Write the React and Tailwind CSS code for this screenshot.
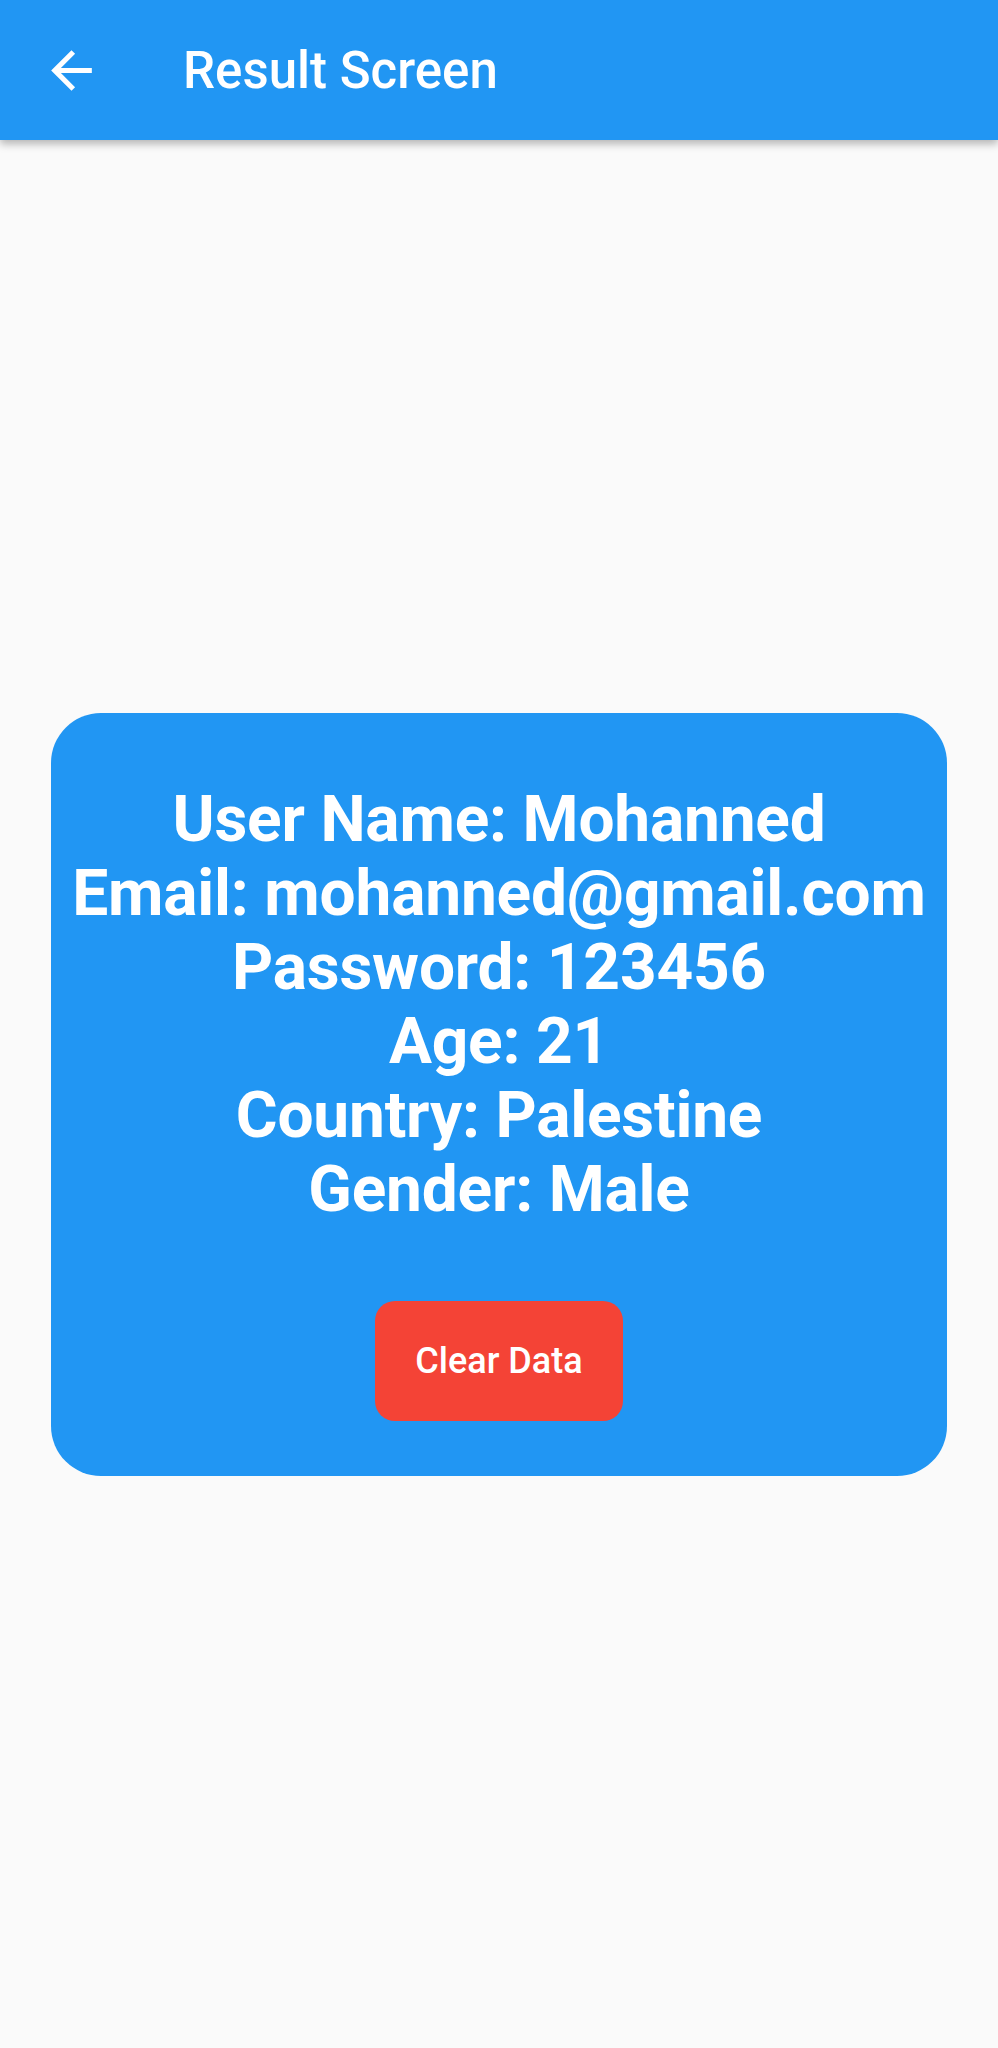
import React from "react";

const user = [
  "User Name: Mohanned",
  "Email: mohanned@gmail.com",
  "Password: 123456",
  "Age: 21",
  "Country: Palestine",
  "Gender: Male",
];

function BackArrow() {
  return (
    <svg viewBox="0 0 24 24" className="w-[61px] h-[61px] fill-white">
      <path d="M20 11H7.83l5.59-5.59L12 4l-8 8 8 8 1.41-1.41L7.83 13H20v-2z" />
    </svg>
  );
}

export default function App() {
  return (
    <div
      className="h-[2048px] w-full flex flex-col bg-[#fafafa]"
      style={{ fontFamily: "Roboto, 'Liberation Sans', sans-serif" }}
    >
      {/* App bar */}
      <header className="h-[140px] shrink-0 flex items-center bg-[#2196f3] shadow-[0_4px_8px_rgba(0,0,0,0.28)] relative z-10">
        <button className="ml-[41px] flex items-center justify-center">
          <BackArrow />
        </button>
        <h1 className="ml-[81px] text-[51px] font-medium text-white leading-none">
          Result Screen
        </h1>
      </header>

      {/* Body */}
      <main className="flex-1 flex items-center px-[51px]">
        <div className="w-full rounded-[50px] bg-[#2196f3] pt-[70px] pb-[55px] flex flex-col items-center">
          <div className="text-center text-white font-bold text-[64px] leading-[74px] tracking-[-0.2px]">
            {user.map((line) => (
              <p key={line}>{line}</p>
            ))}
          </div>
          <button className="mt-[74px] w-[248px] h-[120px] rounded-[20px] bg-[#f44336] text-white text-[36px] font-medium">
            Clear Data
          </button>
        </div>
      </main>
    </div>
  );
}
